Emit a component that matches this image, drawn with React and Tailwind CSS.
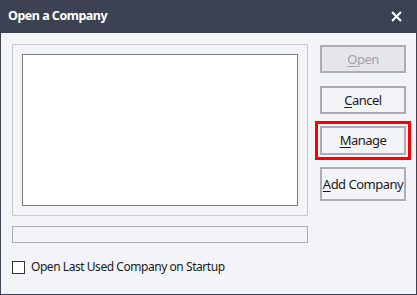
import React from 'react';

const Btn = ({ letter, rest, disabled, className = '' }) => (
  <button
    className={`w-[86px] border-2 border-[#adadb6] text-[13px] leading-none tracking-[-0.5px] whitespace-nowrap flex items-center justify-center ${
      disabled ? 'bg-[#e5e5ea] text-[#a3a3a8]' : 'bg-[#f3f4f8] text-[#1a1a1a]'
    } ${className}`}
  >
    <span>
      <span className="underline underline-offset-2 decoration-1">{letter}</span>
      {rest}
    </span>
  </button>
);

const App = () => {
  return (
    <div className="w-[417px] h-[295px] flex flex-col bg-[#f3f4f8] font-['Noto_Sans',sans-serif] overflow-hidden">
      <div className="h-[33px] bg-[#3c4251] flex items-center justify-between pl-[8px] pr-[15px] shrink-0">
        <span className="text-white text-[12.5px] font-bold tracking-[-0.5px]">Open a Company</span>
        <svg width="11" height="11" viewBox="0 0 11 11">
          <path d="M1 1 L10 10 M10 1 L1 10" stroke="white" strokeWidth="2" />
        </svg>
      </div>
      <div className="flex-1 flex border-l border-r border-b border-[#3c4251] pl-[11px] pt-[11px]">
        <div className="w-[296px] flex flex-col">
          <div className="h-[172px] border border-[#c8c9ce] p-[9px]">
            <div className="w-full h-full bg-white border border-[#7d7d7d]"></div>
          </div>
          <div className="h-[17px] mt-[10px] border border-[#a9aab2]"></div>
          <label className="flex items-center mt-[15px] text-[12px] tracking-[-0.45px] text-[#1a1a1a] whitespace-nowrap">
            <span className="w-[13px] h-[13px] border border-[#333] bg-white mr-[6px]"></span>
            Open Last Used Company on Startup
          </label>
        </div>
        <div className="flex flex-col ml-[12px] pt-[1px]">
          <Btn letter="O" rest="pen" disabled className="h-[28px]" />
          <Btn letter="C" rest="ancel" className="h-[28px] mt-[13px]" />
          <Btn
            letter="M"
            rest="anage"
            className="h-[29px] mt-[12px] outline-[3px] outline-solid outline-[#ff0000] outline-offset-2"
          />
          <Btn letter="A" rest="dd Company" className="h-[34px] mt-[12px]" />
        </div>
      </div>
    </div>
  );
};

export default App;
